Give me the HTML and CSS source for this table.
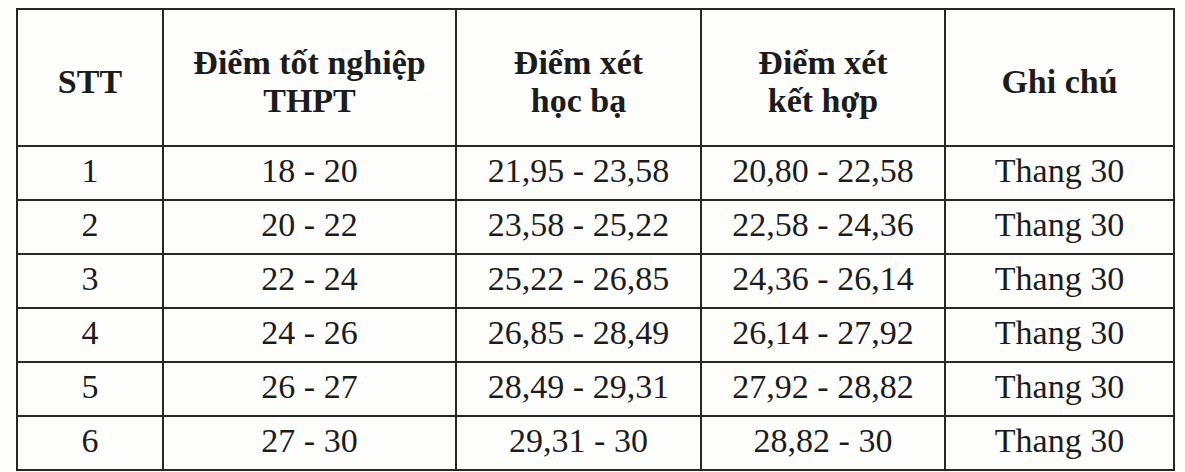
FILE: index.html
```html
<!DOCTYPE html>
<html lang="vi">
<head>
<meta charset="utf-8">
<title>Bảng quy đổi điểm</title>
<link rel="stylesheet" href="styles.css">
</head>
<body>
<table class="score-table">
  <colgroup>
    <col class="c1"><col class="c2"><col class="c3"><col class="c4"><col class="c5">
  </colgroup>
  <thead>
    <tr class="head-row">
      <th>STT</th>
      <th>Điểm tốt nghiệp<br>THPT</th>
      <th>Điểm xét<br>học bạ</th>
      <th>Điểm xét<br>kết hợp</th>
      <th>Ghi chú</th>
    </tr>
  </thead>
  <tbody>
    <tr><td>1</td><td>18 - 20</td><td>21,95 - 23,58</td><td>20,80 - 22,58</td><td>Thang 30</td></tr>
    <tr><td>2</td><td>20 - 22</td><td>23,58 - 25,22</td><td>22,58 - 24,36</td><td>Thang 30</td></tr>
    <tr><td>3</td><td>22 - 24</td><td>25,22 - 26,85</td><td>24,36 - 26,14</td><td>Thang 30</td></tr>
    <tr><td>4</td><td>24 - 26</td><td>26,85 - 28,49</td><td>26,14 - 27,92</td><td>Thang 30</td></tr>
    <tr><td>5</td><td>26 - 27</td><td>28,49 - 29,31</td><td>27,92 - 28,82</td><td>Thang 30</td></tr>
    <tr><td>6</td><td>27 - 30</td><td>29,31 - 30</td><td>28,82 - 30</td><td>Thang 30</td></tr>
  </tbody>
</table>
</body>
</html>
```
FILE: styles.css
```css
html, body {
  margin: 0;
  padding: 0;
  background: #fdfdfc;
}
body {
  padding: 8px 0 0 16px;
  font-family: "Liberation Serif", "Times New Roman", serif;
  color: #1c1c1c;
}
.score-table {
  border-collapse: collapse;
  table-layout: fixed;
  width: 1157px;
  font-size: 34px;
}
.c1 { width: 146px; }
.c2 { width: 293px; }
.c3 { width: 245px; }
.c4 { width: 244px; }
.c5 { width: 229px; }
.score-table th,
.score-table td {
  border: 2px solid #262626;
  text-align: center;
  vertical-align: middle;
  padding: 0;
}
.score-table th {
  font-weight: bold;
  line-height: 38px;
  padding-top: 8px;
}
.head-row { height: 137px; }
.score-table tbody tr { height: 54px; }
.score-table td {
  line-height: 38px;
  padding-bottom: 4px;
}
```
